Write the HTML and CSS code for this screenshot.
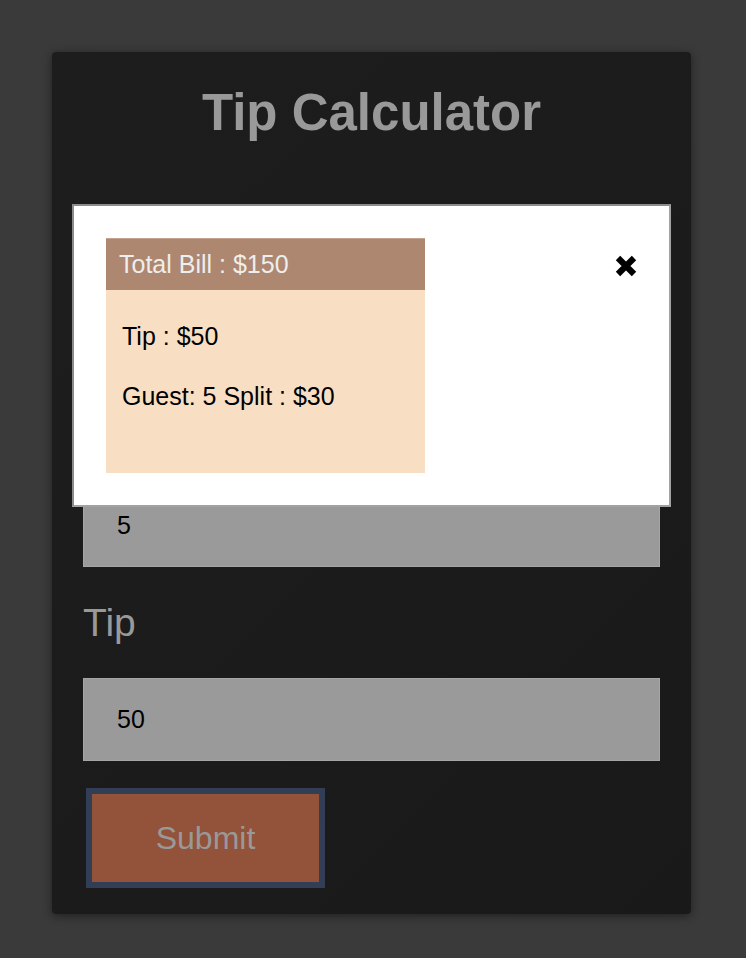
FILE: index.html
```html
<!DOCTYPE html>
<html lang="en">
<head>
<meta charset="utf-8">
<title>Tip Calculator</title>
<link rel="stylesheet" href="styles.css">
</head>
<body>
<main class="calculator">
  <h1 class="title">Tip Calculator</h1>
  <form class="form">
    <label class="field-label" for="bill">Bill</label>
    <input class="field-input" id="bill" type="text" value="150">
    <label class="field-label" for="guests">Guests</label>
    <input class="field-input" id="guests" type="text" value="5">
    <label class="field-label" for="tip">Tip</label>
    <input class="field-input" id="tip" type="text" value="50">
    <button class="submit" type="button">Submit</button>
  </form>

  <div class="modal">
    <div class="result">
      <div class="result-header">Total Bill : $150</div>
      <div class="result-body">
        <p class="result-line">Tip : $50</p>
        <p class="result-line">Guest: 5 Split : $30</p>
      </div>
    </div>
    <button class="close" type="button" aria-label="Close">
      <svg width="24" height="24" viewBox="0 0 24 24">
        <path d="M4 4 L20 20 M20 4 L4 20" stroke="#000" stroke-width="6.2" fill="none" stroke-linecap="butt"/>
      </svg>
    </button>
  </div>
</main>
</body>
</html>
```

FILE: styles.css
```css
html, body {
  margin: 0;
  padding: 0;
}

body {
  background: #3a3a3a;
  font-family: "Liberation Sans", Arial, Helvetica, sans-serif;
  min-height: 958px;
}

.calculator {
  position: relative;
  box-sizing: border-box;
  width: 639px;
  height: 862px;
  margin: 52px 0 0 52px;
  padding: 31px 31px 0;
  background: linear-gradient(135deg, #1e1d1e 0%, #1b1b1b 60%, #19191a 100%);
  border-radius: 4px;
  box-shadow: 0 2px 10px rgba(0, 0, 0, 0.45);
}

.title {
  margin: 0;
  font-size: 51px;
  line-height: 60px;
  font-weight: bold;
  color: #999999;
  text-align: center;
}

.form {
  display: flex;
  flex-direction: column;
  align-items: flex-start;
  margin-top: 0;
}

.field-label {
  display: block;
  height: 111px;
  padding-top: 33px;
  box-sizing: border-box;
  font-size: 39px;
  line-height: 46px;
  color: #999999;
}

.form .field-label:first-child {
  margin-top: 36px;
}

.field-input {
  box-sizing: border-box;
  width: 577px;
  height: 83px;
  margin: 0;
  padding: 0 33px;
  background: #9a9a9a;
  border: 1px solid #a6a6a6;
  font-family: "Liberation Sans", Arial, Helvetica, sans-serif;
  font-size: 25px;
  color: #000000;
  outline: none;
}

.submit {
  box-sizing: border-box;
  width: 239px;
  height: 100px;
  margin: 27px 0 0 3px;
  background: #93523a;
  border: 6px solid #323e55;
  font-family: "Liberation Sans", Arial, Helvetica, sans-serif;
  font-size: 32px;
  color: #999999;
  padding: 0;
}

.modal {
  position: absolute;
  left: 20px;
  top: 152px;
  box-sizing: border-box;
  width: 599px;
  height: 303px;
  padding: 32px;
  background: #ffffff;
  border: 2px solid;
  border-color: #8c8c8c #a2a2a2 #a2a2a2 #8c8c8c;
  display: flex;
  justify-content: space-between;
  align-items: flex-start;
}

.result {
  width: 319px;
  display: flex;
  flex-direction: column;
}

.result-header {
  box-sizing: border-box;
  height: 52px;
  padding: 0 13px;
  background: #ad8770;
  border-top: 1px solid #c4a48e;
  color: #eeeeee;
  font-size: 25px;
  line-height: 50px;
}

.result-body {
  box-sizing: border-box;
  height: 183px;
  padding: 31px 16px 0;
  background: #f8dfc4;
}

.result-line {
  margin: 0 0 30px;
  font-size: 25px;
  line-height: 30px;
  color: #000000;
}

.close {
  margin: 16px -1px 0 0;
  padding: 0;
  width: 24px;
  height: 24px;
  border: none;
  background: transparent;
  display: block;
}

.close svg {
  display: block;
}
```
